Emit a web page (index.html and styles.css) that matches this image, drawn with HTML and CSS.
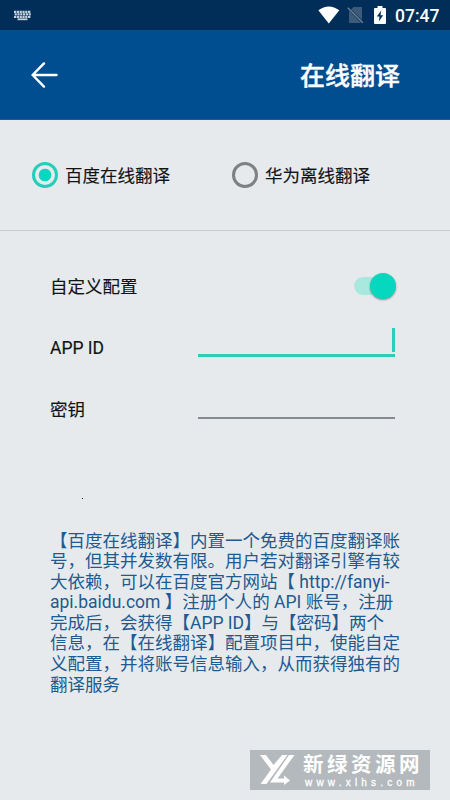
FILE: index.html
```html
<!DOCTYPE html>
<html lang="zh-CN">
<head>
<meta charset="utf-8">
<meta name="viewport" content="width=device-width, initial-scale=1">
<title>在线翻译</title>
<link rel="stylesheet" href="styles.css">
</head>
<body>
<div class="screen">
  <div class="status">
    <svg class="keyboard" width="18" height="11" viewBox="0 0 18 11">
      <path d="M0 1.800H17M.6 4.400H17M0 7H17" stroke="#c3d0dc" stroke-width="2.2" stroke-dasharray="2.200 .6"/>
      <path d="M3.500 9.300H13.500" stroke="#c3d0dc" stroke-width="1.8"/>
    </svg>
    <div class="status-right">
      <svg width="22" height="18" viewBox="0 0 22 18"><path d="M.3 4.2Q10.8-3.4 21.3 4.2L10.8 17.6Z" fill="#fff"/></svg>
      <svg class="sim" width="17" height="18" viewBox="0 0 17 18"><path d="M6.500 1H15V14L4.200 3.200ZM2 4.500L14 17H2Z" fill="#3d5b78"/><path d="M.8 1.800L15.800 16.800" stroke="#6c8297" stroke-width="1.4"/></svg>
      <svg class="battery" width="12" height="18" viewBox="0 0 12 18"><path d="M3.500 0H8.500V2H11Q12 2 12 3V17Q12 18 11 18H1Q0 18 0 17V3Q0 2 1 2H3.500Z" fill="#fff"/><path d="M7.200 4.500L2.800 10.500H5.500L4.800 15.500L9.200 9.200H6.500Z" fill="#002e58"/></svg>
      <span class="clock">07:47</span>
    </div>
  </div>
  <header class="header">
    <svg width="28" height="26" viewBox="0 0 28 26" fill="none" stroke="#fff" stroke-width="2.4" stroke-linecap="round" stroke-linejoin="round"><path d="M13 1.400L1.600 13L13 24.600M1.600 13H25.500"/></svg>
    <h1 class="title">在线翻译</h1>
  </header>
  <div class="engines">
    <label class="engine"><span class="radio radio-on"></span><span class="label">百度在线翻译</span></label>
    <label class="engine"><span class="radio"></span><span class="label">华为离线翻译</span></label>
  </div>
  <div class="form">
    <div class="row"><span class="label">自定义配置</span><span class="switch"><span class="thumb"></span></span></div>
    <div class="row"><span>APP ID</span><span class="field field-focus"><span class="caret"></span></span></div>
    <div class="row"><span>密钥</span><span class="field"></span></div>
  </div>
  <div class="dot"></div>
  <p class="note">
    <span class="line">【百度在线翻译】内置一个免费的百度翻译账</span>
    <span class="line">号，但其并发数有限。用户若对翻译引擎有较</span>
    <span class="line">大依赖，可以在百度官方网站【 http://fanyi-</span>
    <span class="line">api.baidu.com 】注册个人的 API 账号，注册</span>
    <span class="line">完成后，会获得【APP ID】与【密码】两个</span>
    <span class="line">信息，在【在线翻译】配置项目中，使能自定</span>
    <span class="line">义配置，并将账号信息输入，从而获得独有的</span>
    <span class="line">翻译服务</span>
  </p>
  <div class="watermark">
    <svg width="36" height="30" viewBox="0 0 36 30" fill="#fff"><path d="M0 0H6L13.500 10L22 0H27.500L6.500 29H.5L11 14.500ZM29 0H34.500L17.500 23.500H24V20.500L30 25.500L24 30V27.500H10Z"/></svg>
    <div class="mark-text"><span class="mark-name">新绿资源网</span><span class="mark-url">www.xlhs.com</span></div>
  </div>
</div>
</body>
</html>
```
FILE: styles.css
```css
* { box-sizing: border-box; }
body { margin: 0; }
.screen {
  position: relative;
  width: 450px;
  height: 800px;
  overflow: hidden;
  background: #e6eaed;
  color: #111416;
  font: 17.5px/20.6px Roboto, "Noto Sans CJK SC", sans-serif;
}
.status {
  height: 30px;
  padding: 0 10px 0 14px;
  display: flex;
  align-items: center;
  justify-content: space-between;
  background: #002e58;
}
.status-right { display: flex; align-items: center; }
.sim { margin-left: 7px; }
.battery { margin-left: 10px; }
.clock {
  width: 45px;
  margin-left: 9px;
  padding-top: 2px;
  color: #fff;
  font-size: 17.5px;
  font-weight: 500;
  white-space: nowrap;
}
.header {
  height: 90px;
  padding: 0 50px 0 31px;
  display: flex;
  align-items: center;
  justify-content: space-between;
  background: #004e90;
  border-bottom: 1px solid #1c5c94;
}
.title {
  margin: 4px 0 0;
  color: #fff;
  font-size: 25px;
  line-height: 36px;
  font-weight: 500;
  -webkit-text-stroke: .4px #fff;
}
.engines {
  height: 111px;
  padding-left: 32px;
  display: grid;
  grid-template-columns: 200px 200px;
  align-items: center;
  border-bottom: 1px solid #c6cbce;
}
.engine { display: flex; align-items: center; gap: 7px; }
.label { padding-top: 2px; }
.engine, .row { -webkit-text-stroke: .15px #111416; }
.radio {
  width: 26px;
  height: 26px;
  border: 3px solid #7d8183;
  border-radius: 50%;
}
.radio-on {
  border-color: #27cdb9;
  background: radial-gradient(circle, #06d8c0 5.900px, transparent 6.700px);
}
.form { padding: 24px 55px 0 50px; }
.row {
  height: 62px;
  display: flex;
  align-items: center;
  justify-content: space-between;
}
.switch {
  width: 41px;
  height: 18px;
  border-radius: 9px;
  background: #a9e8df;
  display: flex;
  align-items: center;
  justify-content: flex-end;
}
.thumb {
  width: 26px;
  height: 26px;
  flex: none;
  margin-right: -1px;
  border-radius: 50%;
  background: #06d8c0;
  box-shadow: 0 1px 2px rgba(0, 0, 0, .4);
}
.field {
  position: relative;
  width: 197px;
  height: 30px;
  margin-top: -12px;
  border-bottom: 2px solid #858b8f;
}
.field-focus { border-bottom: 3px solid #2bcdbb; }
.caret {
  position: absolute;
  right: 0;
  bottom: 2px;
  width: 3px;
  height: 24px;
  background: #2bcdbb;
}
.dot {
  width: 1px;
  height: 1px;
  margin: 57px 0 0 82px;
  background: #222;
}
.note {
  margin: 31.500px 0 0 50px;
  color: #205a91;
}
.line { display: block; white-space: nowrap; }
.watermark {
  position: absolute;
  left: 250px;
  top: 750px;
  width: 180px;
  height: 40px;
  padding-left: 10px;
  display: flex;
  align-items: center;
  gap: 7px;
  background: #b3b9bc;
  color: #fff;
}
.mark-text { display: flex; flex-direction: column; }
.mark-name {
  font-size: 20.5px;
  line-height: 24px;
  font-weight: 700;
  letter-spacing: 3.500px;
  white-space: nowrap;
}
.mark-url {
  padding-left: 2px;
  font: 10px/11px "Liberation Sans", sans-serif;
  letter-spacing: 4.200px;
  -webkit-text-stroke: .3px #fff;
}
```
